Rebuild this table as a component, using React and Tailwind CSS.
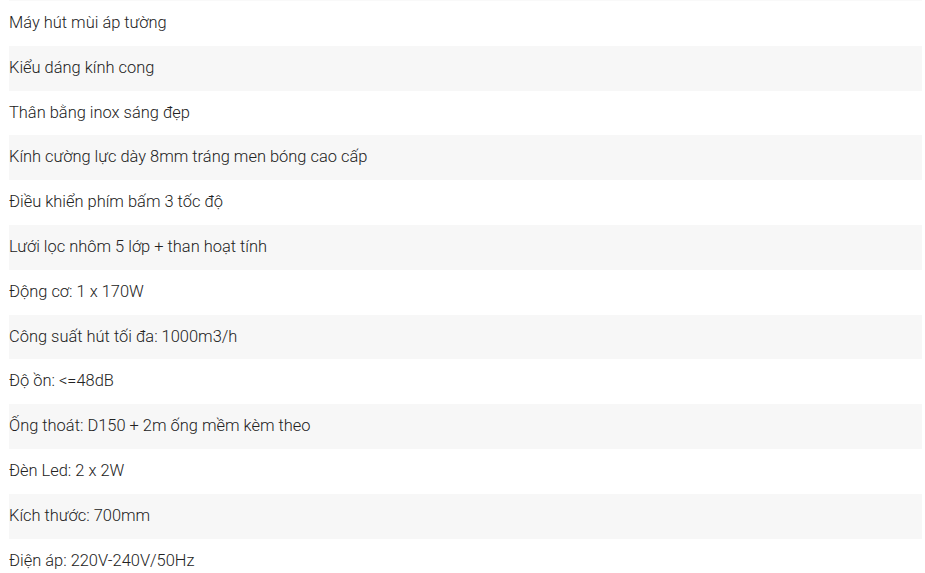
const specs = [
  "Máy hút mùi áp tường",
  "Kiểu dáng kính cong",
  "Thân bằng inox sáng đẹp",
  "Kính cường lực dày 8mm tráng men bóng cao cấp",
  "Điều khiển phím bấm 3 tốc độ",
  "Lưới lọc nhôm 5 lớp + than hoạt tính",
  "Động cơ: 1 x 170W",
  "Công suất hút tối đa: 1000m3/h",
  "Độ ồn: <=48dB",
  "Ống thoát: D150 + 2m ống mềm kèm theo",
  "Đèn Led: 2 x 2W",
  "Kích thước: 700mm",
  "Điện áp: 220V-240V/50Hz",
];

export default function App() {
  return (
    <div className="min-h-[573px] bg-white pl-[9px] pr-[3px] font-['Roboto',sans-serif] text-[16.45px] font-light text-[#222]">
      <div className="h-px bg-[#f9f9f9]" />
      <ul>
        {specs.map((s, i) => (
          <li
            key={i}
            className={`flex h-[44.8px] items-center ${i % 2 === 1 ? "bg-[#f7f7f7]" : "bg-white"}`}
          >
            {s}
          </li>
        ))}
      </ul>
    </div>
  );
}
